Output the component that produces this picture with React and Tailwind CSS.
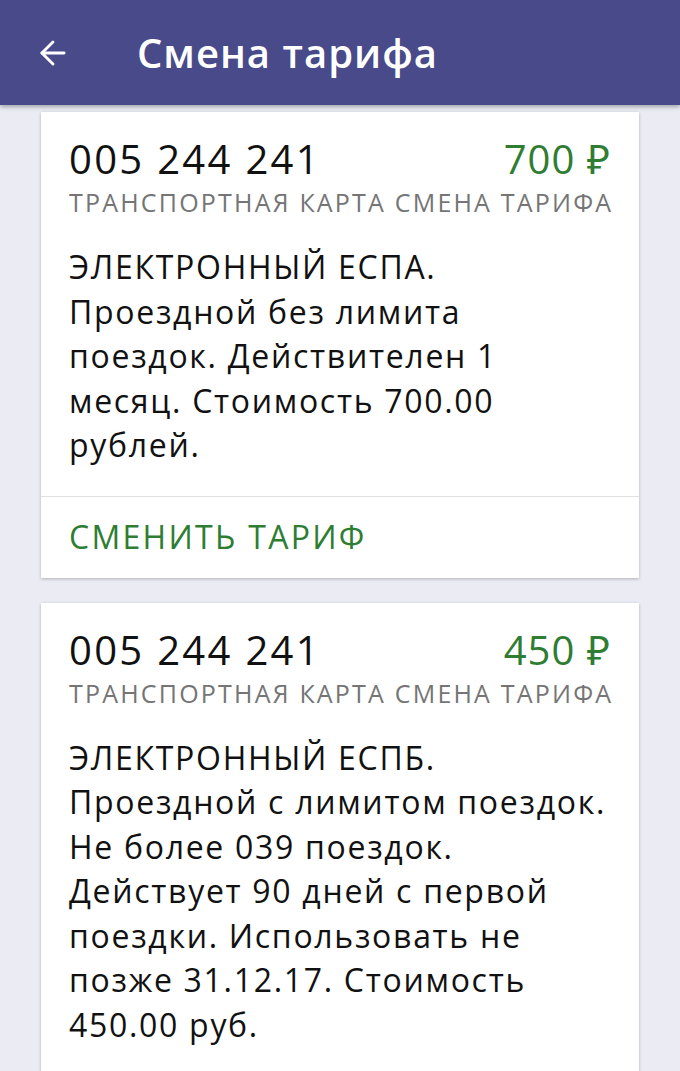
import React from "react";
import { ArrowLeft } from "lucide-react";

const tariffs = [
  {
    id: "005 244 241",
    price: "700 ₽",
    lines: [
      "ЭЛЕКТРОННЫЙ ЕСПА.",
      "Проездной без лимита",
      "поездок. Действителен 1",
      "месяц. Стоимость 700.00",
      "рублей.",
    ],
  },
  {
    id: "005 244 241",
    price: "450 ₽",
    lines: [
      "ЭЛЕКТРОННЫЙ ЕСПБ.",
      "Проездной с лимитом поездок.",
      "Не более 039 поездок.",
      "Действует 90 дней с первой",
      "поездки. Использовать не",
      "позже 31.12.17. Стоимость",
      "450.00 руб.",
    ],
  },
];

const TariffCard = ({ tariff }) => {
  return (
    <div className="bg-white shadow-[0_1px_3px_rgba(0,0,0,0.25)]">
      <div className="px-7 pt-[22px] pb-[28px]">
        <div className="flex items-center justify-between h-[50px]">
          <span className="text-[40px] tracking-[2.3px] text-[#111] leading-none">{tariff.id}</span>
          <span className="text-[40px] tracking-[1px] text-[#2e7d32] leading-none">{tariff.price}</span>
        </div>
        <div className="text-[25px] tracking-[2.2px] text-[#757575] leading-[34px] mt-[1px] whitespace-nowrap">
          ТРАНСПОРТНАЯ КАРТА СМЕНА ТАРИФА
        </div>
        <div className="mt-[26px] text-[32px] tracking-[1.7px] leading-[44.5px] text-[#111]">
          {tariff.lines.map((line, i) => (
            <div key={i} className="whitespace-nowrap">
              {line}
            </div>
          ))}
        </div>
      </div>
      <div className="border-t border-[#e0e0e0] h-[82px] px-7 flex items-center">
        <span className="text-[32px] tracking-[2.3px] text-[#2e7d32]">СМЕНИТЬ ТАРИФ</span>
      </div>
    </div>
  );
};

export default function App() {
  return (
    <div
      className="w-[680px] h-[1071px] overflow-hidden bg-[#ebebf4]"
      style={{ fontFamily: "'Open Sans', 'Noto Sans', sans-serif" }}
    >
      <div className="relative z-10 h-[105px] bg-[#484a8a] flex items-center shadow-[0_2px_4px_rgba(0,0,0,0.3)]">
        <ArrowLeft className="ml-[34px] text-white" size={38} strokeWidth={1.8} />
        <span className="ml-[65px] text-[40px] tracking-[1px] font-semibold text-white">Смена тарифа</span>
      </div>
      <div className="px-[41px] pt-[7px] flex flex-col gap-[25px]">
        {tariffs.map((t, i) => (
          <TariffCard key={i} tariff={t} />
        ))}
      </div>
    </div>
  );
}
